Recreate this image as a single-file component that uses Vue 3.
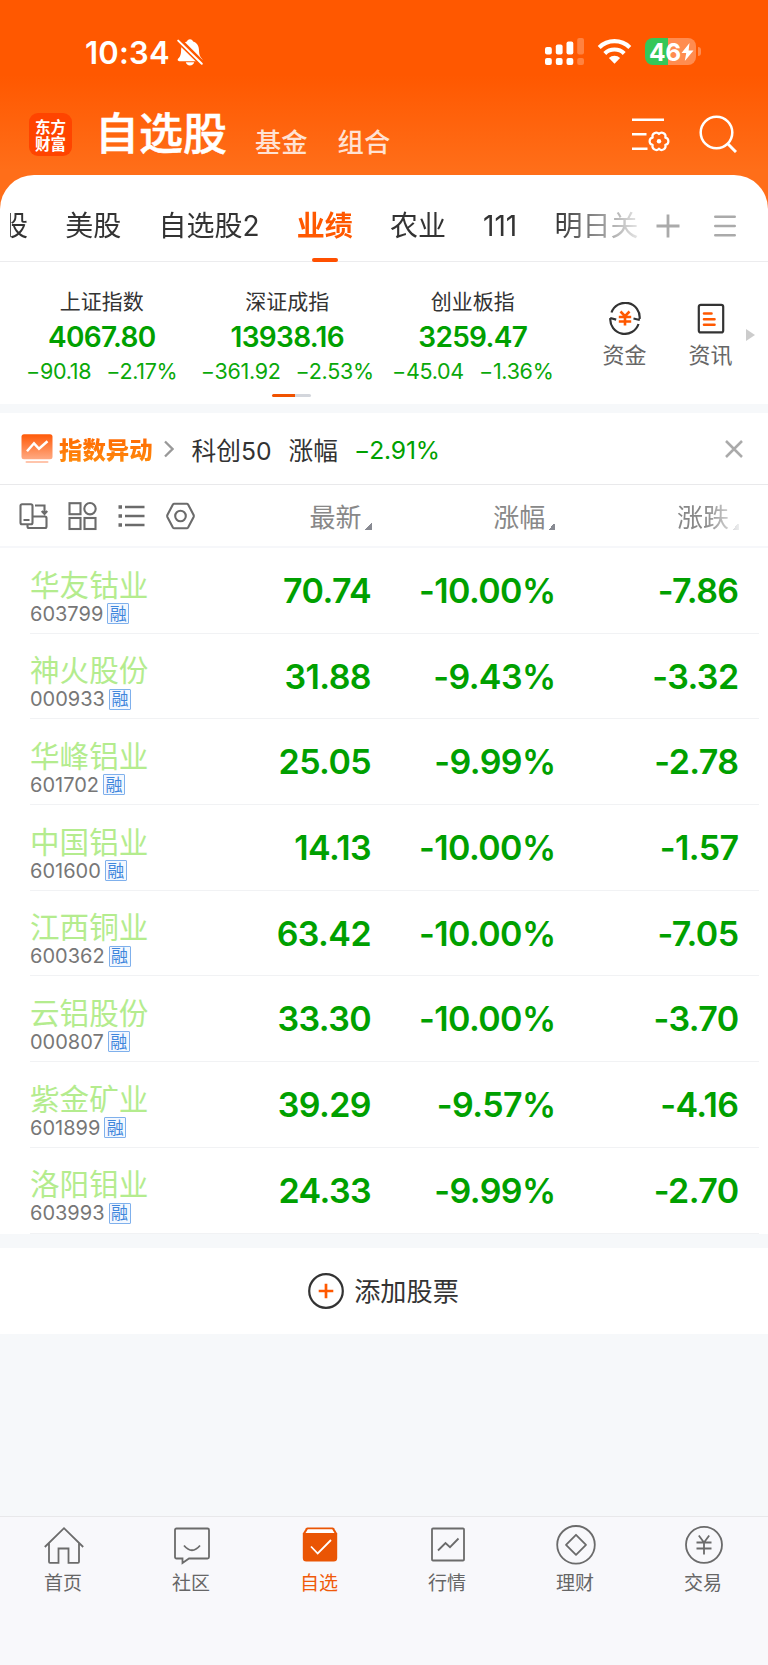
<template>
  <div class="page">
    <header class="header">
      <div class="status-bar">
        <div class="clock">
          <span>10:34</span>
          <svg class="bell" width="28" height="28" viewBox="0 0 28 28">
            <path d="M14 1.200c1.600 0 2.800 1 3.100 2.400 4 1.300 5.800 4.500 5.900 8.800.1 4.600 1.300 6.300 3 8.300.8 1.100.4 2.500-1 2.500H3.200c-1.600 0-2-1.500-1-2.600 1.800-2 2.800-3.700 2.900-8.200.1-4.400 1.900-7.500 5.800-8.800C11.200 2.200 12.400 1.200 14 1.200z" fill="#fff" />
            <path d="M9.800 24.300h8.400c-.4 1.900-2 3.200-4.200 3.200s-3.800-1.300-4.200-3.200z" fill="#fff" />
            <path d="M3 0L28.500 25.500" stroke="#ff5800" stroke-width="2.4" />
            <path d="M2 2.500L26 26" stroke="#ff5800" stroke-width="5" />
            <path d="M2.200 2.600L25.800 25.800" stroke="#fff" stroke-width="2" stroke-linecap="round" />
          </svg>
        </div>
        <div class="status-icons">
          <svg width="39" height="28" viewBox="0 0 39 28" fill="#fff">
            <rect x="0" y="9" width="6.8" height="7.5" rx="2" />
            <rect x="10.8" y="6.5" width="6.8" height="10" rx="2" />
            <rect x="21.5" y="3.5" width="6.8" height="13" rx="2" />
            <rect x="32.2" y="0" width="6.8" height="16.5" rx="2" opacity=".25" />
            <rect x="0" y="20" width="6.8" height="7" rx="2" />
            <rect x="10.8" y="20" width="6.8" height="7" rx="2" />
            <rect x="21.5" y="20" width="6.8" height="7" rx="2" />
            <rect x="32.2" y="20" width="6.8" height="7" rx="2" opacity=".25" />
          </svg>
          <svg class="wifi" width="35" height="26" viewBox="0 0 35 26">
            <path d="M2.200 9.400a22 22 0 0 1 30.600 0M7.800 15.400a14 14 0 0 1 19.400 0" fill="none" stroke="#fff" stroke-width="4.2" />
            <path d="M11.900 20a8.400 8.400 0 0 1 11.200 0L17.500 25.700z" fill="#fff" />
          </svg>
          <div class="battery">
            <span>46</span>
            <svg width="13" height="18" viewBox="0 0 13 18">
              <path d="M8.500 0L.5 10h4.700L3.800 18 12.500 7.500H7.600z" fill="#fff" />
            </svg>
          </div>
          <i class="battery-nub" />
        </div>
      </div>

      <div class="nav">
        <div class="logo">
          <span>东方</span>
          <span>财富</span>
        </div>
        <h1 class="nav-title">自选股</h1>
        <span class="nav-link">基金</span>
        <span class="nav-link">组合</span>
        <svg class="nav-settings" width="38" height="36" viewBox="0 0 38 36" fill="none" stroke="#fff" stroke-width="2.6">
          <path d="M0 2.800h32M0 17.300h14.500M0 31.700h15.500" />
          <path d="M27 17A3.700 3.700 0 0 1 33.300 20.650A3.700 3.700 0 0 1 33.300 27.950A3.700 3.700 0 0 1 27 31.600A3.700 3.700 0 0 1 20.700 27.950A3.700 3.700 0 0 1 20.700 20.650A3.700 3.700 0 0 1 27 17z" stroke-width="2.2" stroke-linejoin="round" />
          <circle cx="27" cy="24.3" r="2.2" fill="#fff" stroke="none" />
        </svg>
        <svg class="nav-search" width="38" height="38" viewBox="0 0 38 38" fill="none" stroke="#fff" stroke-width="2.5">
          <circle cx="17.5" cy="17.5" r="15.8" />
          <path d="M28.500 28.500l8.500 8.500" stroke-width="3" />
        </svg>
      </div>
    </header>

    <main class="sheet">
      <nav class="tabs">
        <div class="tab-strip">
          <span
            v-for="tab in tabs"
            :key="tab"
            class="tab"
            :class="{ active: tab === activeTab }"
          >{{ tab }}</span>
        </div>
        <svg class="tab-add" width="24" height="24" viewBox="0 0 24 24" stroke="#aaa" stroke-width="2.8">
          <path d="M0.500 12h23M12 0.500v23" />
        </svg>
        <svg class="tab-menu" width="22" height="22" viewBox="0 0 22 22" stroke="#aaa" stroke-width="2.6" stroke-linecap="round">
          <path d="M1.300 1.700h19.400M1.300 11h19.400M1.300 20.300h19.400" />
        </svg>
      </nav>

      <section class="indices">
        <div v-for="item in indices" :key="item.name" class="index">
          <span class="index-name">{{ item.name }}</span>
          <strong class="index-value">{{ item.value }}</strong>
          <span class="index-change">
            <span>{{ item.change }}</span>
            <span>{{ item.percent }}</span>
          </span>
        </div>
        <div class="shortcut">
          <svg width="32" height="33" viewBox="0 0 32 33" fill="none" stroke="#333" stroke-width="2.2">
            <path d="M2.500 10.500A14.500 14.500 0 0 1 30.600 16.800M30.800 18L24.500 16.500M29.500 22A14.500 14.500 0 0 1 1.300 16.200M1.200 16L7.200 17.600" />
            <path d="M11.500 9.500l4.500 4.700 4.500-4.700M9.800 15h12.400M9.800 19.500h12.400M16 14v9.500" stroke="#ff5800" stroke-width="2.6" />
          </svg>
          <span>资金</span>
        </div>
        <div class="shortcut">
          <svg width="28" height="33" viewBox="0 0 28 33" fill="none" stroke="#333" stroke-width="2.2">
            <rect x="1.8" y="2.8" width="24.4" height="27.6" rx="2" />
            <path d="M7 11.500h7.500M7 17.200h10.500M7 22.800h10.500" stroke="#ff5800" stroke-width="2.6" stroke-linecap="round" />
          </svg>
          <span>资讯</span>
        </div>
        <i class="more-arrow" />
        <i class="pager" />
      </section>

      <section class="alert">
        <svg class="alert-icon" width="32" height="30" viewBox="0 0 32 30">
          <defs>
            <linearGradient id="alert-fill" x1="0" y1="0" x2="0" y2="1">
              <stop offset="0" stop-color="#ff5a08" />
              <stop offset="1" stop-color="#ffaa83" />
            </linearGradient>
          </defs>
          <rect x="0.5" y="0.3" width="31" height="25" rx="2.5" fill="url(#alert-fill)" />
          <path d="M6 17.300l7-8 5 5.500 8.500-7.500" fill="none" stroke="#fff" stroke-width="2.5" />
          <rect x="4.5" y="27" width="23" height="2" rx="1" fill="#ffc5ac" />
        </svg>
        <strong class="alert-title">指数异动</strong>
        <svg class="alert-chevron" width="10" height="18" viewBox="0 0 10 18" fill="none" stroke="#999" stroke-width="2.3">
          <path d="M1 1.500L8.500 9 1 16.500" />
        </svg>
        <span class="alert-name">科创50</span>
        <span class="alert-label">涨幅</span>
        <span class="alert-value">−2.91%</span>
        <svg class="alert-close" width="18" height="18" viewBox="0 0 18 18" stroke="#aaa" stroke-width="2.5">
          <path d="M1 1l16 16M17 1L1 17" />
        </svg>
      </section>

      <section class="toolbar">
        <div class="tools">
          <svg width="29" height="30" viewBox="0 0 29 30">
            <path d="M3 3.200h9a1.500 1.500 0 0 1 1.500 1.500v17a1.500 1.500 0 0 1-1.500 1.500H3a1.500 1.500 0 0 1-1.500-1.500v-17A1.500 1.500 0 0 1 3 3.200zM4.500 19h6M16 4.500h9.500v8M22.700 10l2.800 3 2.800-3M14 15.500h12a1.500 1.500 0 0 1 1.500 1.500v8.500a1.500 1.500 0 0 1-1.500 1.500H10A1.500 1.500 0 0 1 8.500 25.500V23.500" />
          </svg>
          <svg width="29" height="30" viewBox="0 0 29 30">
            <rect x="1.5" y="2.2" width="11" height="11" />
            <circle cx="22" cy="7.7" r="5.7" />
            <rect x="1.5" y="17" width="11" height="11" />
            <rect x="16.5" y="17" width="11" height="11" />
          </svg>
          <svg width="29" height="30" viewBox="0 0 29 30">
            <path d="M8 6h19.500M8 15h19.500M8 24h19.500" stroke-width="2.6" />
            <path d="M1.500 6h3.500M1.500 15h3.500M1.500 24h3.500" stroke-width="3.4" />
          </svg>
          <svg width="29" height="30" viewBox="0 0 29 30">
            <path d="M8.300 2.700h12.400q.9 0 1.400.8l5.400 10.200q.6 1.300 0 2.600l-5.400 10.200q-.5.800-1.400.8H8.300q-.9 0-1.400-.8L1.500 16.300q-.6-1.300 0-2.600L6.900 3.500q.5-.8 1.400-.8z" />
            <circle cx="14.5" cy="15" r="5.3" />
          </svg>
        </div>
        <span class="sort">最新</span>
        <span class="sort">涨幅</span>
        <span class="sort sort-change">涨跌</span>
      </section>

      <ul class="stocks">
        <li v-for="stock in stocks" :key="stock.code" class="stock">
          <div class="stock-id">
            <span class="stock-name">{{ stock.name }}</span>
            <span class="stock-code">{{ stock.code }}<i class="badge">融</i></span>
          </div>
          <span class="stock-price">{{ stock.price }}</span>
          <span class="stock-percent">{{ stock.percent }}</span>
          <span class="stock-change">{{ stock.change }}</span>
        </li>
      </ul>

      <button class="add-stock">
        <svg width="36" height="36" viewBox="0 0 36 36" fill="none">
          <circle cx="18" cy="18" r="16.8" stroke="#333" stroke-width="2.2" />
          <path d="M10.700 18h14.600M18 10.700v14.600" stroke="#ff5800" stroke-width="2.7" />
        </svg>
        <span>添加股票</span>
      </button>
    </main>

    <footer class="tab-bar">
      <div class="bar-item">
        <svg width="40" height="40" viewBox="0 0 40 40">
          <path d="M.8 22L20 3.200 39.200 22M5 18.500v18.300q0 1 1 1h8.500V23.500h10v14.300H34q1 0 1-1V18.500" />
        </svg>
        <span>首页</span>
      </div>
      <div class="bar-item">
        <svg width="40" height="40" viewBox="0 0 40 40">
          <path d="M4.500 3.500h31q1.500 0 1.500 1.500v27q0 1.500-1.500 1.500H17l-6.500 4.500v-4.500h-6Q3 33.500 3 32V5q0-1.500 1.500-1.500z" />
          <path d="M12 20.500q8 9.500 16 0" />
        </svg>
        <span>社区</span>
      </div>
      <div class="bar-item active">
        <svg width="40" height="40" viewBox="0 0 40 40">
          <path d="M7.500 2.500h25q1 0 1.500.8l3.200 5.200V33q0 3.500-3.500 3.500H6.300Q2.800 36.500 2.800 33V8.500L6 3.300q.5-.8 1.500-.8z" fill="#ea5504" stroke="none" />
          <path d="M7.800 4.300h24.400l2.300 3.800H5.500z" fill="#fff" stroke="none" />
          <path d="M11 21.500l6.700 7L31 15" stroke="#fff" />
        </svg>
        <span>自选</span>
      </div>
      <div class="bar-item">
        <svg width="40" height="40" viewBox="0 0 40 40">
          <rect x="4" y="3.5" width="32" height="32" rx="1" />
          <path d="M10 25.500l7.500-7.500 4.500 4.200 8.500-8.700" />
        </svg>
        <span>行情</span>
      </div>
      <div class="bar-item">
        <svg width="40" height="40" viewBox="0 0 40 40">
          <circle cx="20" cy="19.8" r="18.8" />
          <path d="M20 9.800L30 19.800 20 29.800 10 19.800z" stroke-linejoin="round" />
        </svg>
        <span>理财</span>
      </div>
      <div class="bar-item">
        <svg width="40" height="40" viewBox="0 0 40 40">
          <circle cx="20" cy="19.8" r="18" />
          <path d="M14.800 10.500l5.200 7 5.200-7M12.500 17.500h15M12.500 23.500h15M20 17v12.500" />
        </svg>
        <span>交易</span>
      </div>
    </footer>
  </div>
</template>

<script setup>
import { ref } from 'vue'

const tabs = ['股', '美股', '自选股2', '业绩', '农业', '111', '明日关']
const activeTab = ref('业绩')

const indices = [
  { name: '上证指数', value: '4067.80', change: '−90.18', percent: '−2.17%' },
  { name: '深证成指', value: '13938.16', change: '−361.92', percent: '−2.53%' },
  { name: '创业板指', value: '3259.47', change: '−45.04', percent: '−1.36%' },
]

const stocks = [
  { name: '华友钴业', code: '603799', price: '70.74', percent: '-10.00%', change: '-7.86' },
  { name: '神火股份', code: '000933', price: '31.88', percent: '-9.43%', change: '-3.32' },
  { name: '华峰铝业', code: '601702', price: '25.05', percent: '-9.99%', change: '-2.78' },
  { name: '中国铝业', code: '601600', price: '14.13', percent: '-10.00%', change: '-1.57' },
  { name: '江西铜业', code: '600362', price: '63.42', percent: '-10.00%', change: '-7.05' },
  { name: '云铝股份', code: '000807', price: '33.30', percent: '-10.00%', change: '-3.70' },
  { name: '紫金矿业', code: '601899', price: '39.29', percent: '-9.57%', change: '-4.16' },
  { name: '洛阳钼业', code: '603993', price: '24.33', percent: '-9.99%', change: '-2.70' },
]
</script>

<style>
body {
  background: #f6f8fa;
}
</style>

<style scoped>
.page {
  display: flex;
  flex-direction: column;
  width: 768px;
  height: 1665px;
  overflow: hidden;
  background: #f6f8fa;
  color: #333;
  font-family: Inter, "Noto Sans CJK SC", sans-serif;
}

svg {
  display: block;
  flex: none;
}

span,
strong {
  white-space: nowrap;
}

/* Header */
.header {
  flex: none;
  height: 215px;
  margin-bottom: -40px;
  background: linear-gradient(#ff5800 75px, #ff6e19 170px);
  color: #fff;
}

.status-bar {
  display: flex;
  justify-content: space-between;
  height: 104px;
  padding: 0 67px 0 85px;
  box-sizing: border-box;
}

.clock {
  display: flex;
  padding-top: 32px;
  font-size: 31px;
  font-weight: 600;
  letter-spacing: 0.2px;
  line-height: 41px;
}

.bell {
  margin: 6px 0 0 6px;
}

.status-icons {
  display: flex;
  padding-top: 38px;
}

.wifi {
  margin-left: 13px;
}

.battery {
  display: flex;
  align-items: center;
  width: 51px;
  height: 27px;
  margin-left: 13px;
  padding-left: 4px;
  box-sizing: border-box;
  border-radius: 8px;
  background: linear-gradient(90deg, #34c759 23px, #ff8c50 23px);
  font-size: 24.5px;
  font-weight: 700;
  letter-spacing: -0.4px;
}

.battery-nub {
  width: 3px;
  height: 9px;
  margin: 9px 0 0 2px;
  border-radius: 0 4px 4px 0;
  background: #ff8c50;
}

.nav {
  display: flex;
  height: 71px;
  padding: 0 31px 0 29px;
}

.logo {
  display: flex;
  flex-direction: column;
  align-items: center;
  justify-content: center;
  width: 43px;
  height: 43px;
  margin: 9px 23px 0 0;
  border-radius: 9px;
  background: #ff4400;
  font-family: "Noto Sans CJK SC", sans-serif;
  font-size: 15.5px;
  font-weight: 700;
  line-height: 18px;
}

.logo span {
  margin-top: -1px;
}

.nav-title {
  margin: 0 28px 0 0;
  font-size: 44px;
  font-weight: 500;
  line-height: 61px;
  -webkit-text-stroke: 0.5px #fff;
}

.nav-link {
  margin-right: 30px;
  color: #ffe2d3;
  font-size: 26.3px;
  font-weight: 500;
  line-height: 78px;
}

.nav-settings {
  margin: 13px 0 0 auto;
}

.nav-search {
  margin: 11px 0 0 29px;
}

/* Group tabs */
.sheet {
  flex: 1;
}

.tabs {
  display: flex;
  height: 87px;
  padding-left: 10px;
  box-sizing: border-box;
  border-bottom: 1px solid #ececee;
  border-radius: 34px 34px 0 0;
  background: #fff;
}

.tab-strip {
  display: flex;
  gap: 37.2px;
  width: 630px;
  height: 87px;
  overflow: hidden;
  -webkit-mask-image: linear-gradient(90deg, #000 545px, transparent 640px);
  mask-image: linear-gradient(90deg, #000 545px, transparent 640px);
}

.tab {
  position: relative;
  flex: none;
  font-size: 28px;
  line-height: 102px;
}

.tab:first-child {
  margin-left: -10px;
}

.tab.active {
  color: #ff5800;
  font-weight: 700;
}

.tab.active::after {
  content: '';
  position: absolute;
  left: 15px;
  top: 83px;
  width: 26px;
  height: 4px;
  border-radius: 2px;
  background: #ff5000;
}

.tab-add {
  margin: 39px 0 0 16px;
}

.tab-menu {
  margin: 40px 0 0 34px;
}

/* Market indices */
.indices {
  position: relative;
  display: flex;
  height: 142px;
  padding-left: 9px;
  box-sizing: border-box;
  background: #fff;
}

.index {
  display: flex;
  flex-direction: column;
  align-items: center;
  width: 185.5px;
  padding-top: 24px;
}

.index-name {
  font-size: 21px;
  line-height: 32px;
}

.index-value {
  color: #00a000;
  font-size: 28px;
  font-weight: 600;
  letter-spacing: -0.7px;
  line-height: 38px;
}

.index-change {
  display: flex;
  gap: 15px;
  color: #0aa80a;
  font-size: 21.5px;
  letter-spacing: -0.3px;
  line-height: 30px;
}

.shortcut {
  display: flex;
  flex-direction: column;
  align-items: center;
  width: 86px;
  padding-top: 40px;
  color: #666;
  font-size: 22px;
  line-height: 41px;
}

.index + .shortcut {
  margin-left: 16px;
}

.more-arrow {
  position: absolute;
  left: 746px;
  top: 67px;
  border: solid transparent;
  border-width: 6px 0 6px 9px;
  border-left-color: #ccc;
}

.pager {
  position: absolute;
  left: 272px;
  top: 132px;
  width: 39px;
  height: 3px;
  border-radius: 2px;
  background: linear-gradient(90deg, #f05200 23px, #d3d6dc 23px);
}

/* Index alert */
.alert {
  display: flex;
  align-items: center;
  height: 81px;
  padding: 0 25px 0 21px;
  box-sizing: border-box;
  border-top: 9px solid #f6f8fa;
  border-bottom: 1px solid #e9e9eb;
  background: #fff;
  font-size: 24.7px;
}

.alert-title {
  margin-left: 6px;
  background: linear-gradient(#ff6200, #ff8f0e);
  -webkit-background-clip: text;
  background-clip: text;
  color: transparent;
  font-size: 23.4px;
  font-weight: 900;
}

.alert-chevron {
  margin-left: 11px;
}

.alert-name {
  margin-left: 18px;
}

.alert-label {
  margin-left: 17px;
}

.alert-value {
  margin: 2px 0 0 16px;
  color: #00a000;
  letter-spacing: -0.2px;
}

.alert-close {
  margin: 1px 0 0 auto;
}

/* Column header */
.toolbar {
  display: flex;
  align-items: center;
  height: 63px;
  padding-left: 18.5px;
  box-sizing: border-box;
  border-bottom: 2px solid #f6f7fa;
  background: #fff;
}

.tools {
  display: flex;
  gap: 20.3px;
  width: 291px;
  fill: none;
  stroke: #6b6b6b;
  stroke-width: 2.1;
}

.sort {
  display: flex;
  align-items: flex-end;
  width: 183.7px;
  padding-top: 4px;
  color: #888;
  font-size: 26px;
  line-height: 38px;
}

.sort::after {
  content: '';
  width: 7px;
  height: 7px;
  margin: 0 0 7px 3px;
  background: linear-gradient(135deg, transparent 50%, #888a92 50%);
}

.sort-change {
  width: auto;
  -webkit-mask-image: linear-gradient(90deg, #000 45%, transparent 110%);
  mask-image: linear-gradient(90deg, #000 45%, transparent 110%);
}

/* Stock list */
.stocks {
  margin: 0;
  padding: 0 9px 0 30px;
  background: #fff;
  list-style: none;
}

.stock {
  display: flex;
  height: 85.7px;
  box-sizing: border-box;
  border-bottom: 1px solid #f1f2f4;
}

.stock-id {
  display: flex;
  flex-direction: column;
  width: 170px;
  padding-top: 16.5px;
}

.stock-name {
  color: #b4ec8e;
  font-size: 29.6px;
  line-height: 40px;
}

.stock-code {
  display: flex;
  align-items: center;
  height: 20px;
  margin-top: -1px;
  color: #777;
  font-size: 20px;
  line-height: 18px;
}

.badge {
  display: flex;
  align-items: center;
  justify-content: center;
  width: 22px;
  height: 21px;
  margin-left: 4px;
  box-sizing: border-box;
  border: 1px solid #7fb0ec;
  border-radius: 1px;
  background: #f3f8ff;
  color: #3f86dc;
  font-size: 17px;
  font-style: normal;
}

.stock-price,
.stock-percent,
.stock-change {
  color: #00a000;
  font-size: 34px;
  font-weight: 600;
  letter-spacing: -0.6px;
  line-height: 86px;
  text-align: right;
}

.stock-price {
  width: 171px;
}

.stock-percent {
  width: 184.5px;
}

.stock-change {
  width: 183px;
}

.add-stock {
  display: flex;
  align-items: center;
  justify-content: center;
  gap: 10px;
  width: 100%;
  height: 86px;
  margin-top: 14px;
  padding: 0 1px 0 0;
  border: 0;
  background: #fff;
  color: #333;
  font: 26.2px Inter, "Noto Sans CJK SC", sans-serif;
}

.add-stock span {
  margin-top: -1px;
}

/* Bottom navigation */
.tab-bar {
  display: flex;
  flex: none;
  height: 149px;
  box-sizing: border-box;
  border-top: 1px solid #e8e8ea;
  background: #f8f8fb;
}

.bar-item {
  display: flex;
  flex: 1;
  flex-direction: column;
  align-items: center;
  padding-top: 8px;
  color: #666;
  font-size: 19px;
  line-height: 37px;
}

.bar-item span {
  margin-right: 2px;
}

.bar-item svg {
  fill: none;
  stroke: #6b6b6b;
  stroke-width: 1.8;
}

.bar-item.active {
  color: #f05a0a;
}
</style>
